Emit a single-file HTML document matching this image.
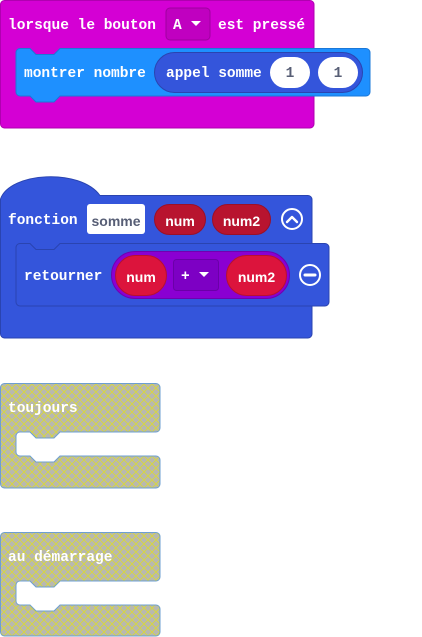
<!DOCTYPE html>
<html><head><meta charset="utf-8"><style>
html,body{margin:0;padding:0;background:#fff;width:422px;height:637px;overflow:hidden}
svg{display:block}
text{font-family:"Liberation Mono",monospace;font-weight:bold;font-size:14.5px;fill:#fff;dominant-baseline:central;transform:translateY(2px)}
.s{font-family:"Liberation Sans",sans-serif;font-size:14px}
</style></head><body>
<svg width="422" height="637" viewBox="0 0 422 637">
<defs>
<pattern id="hatch" width="8" height="8" patternUnits="userSpaceOnUse">
<rect width="8" height="8" fill="#b8b8b0"/>
<path d="M0,0 L8,8 M8,0 L0,8" stroke="#d8d83a" stroke-width="0.9"/>
</pattern>
</defs>
<!-- Block 1 -->
<rect x="0.5" y="0.5" width="313.5" height="127.5" rx="4" fill="#d400d4" stroke="#b000b0"/>
<text x="8" y="24">lorsque le bouton</text>
<rect x="166" y="8" width="44" height="32" rx="4" fill="#c000c0" stroke="#a000a0"/>
<text x="173" y="24">A</text>
<path d="M191,21 h10 l-5,5 z" fill="#fff"/>
<text x="218" y="24">est pressé</text>
<path d="M20,48.5 H30 l6,6 h18 l6,-6 H366 a4,4 0 0 1 4,4 V92 a4,4 0 0 1 -4,4 H60 l-6,6 h-18 l-6,-6 H20 a4,4 0 0 1 -4,-4 V52.5 a4,4 0 0 1 4,-4 Z" fill="#1e90ff" stroke="#1a78d8"/>
<text x="24" y="72">montrer nombre</text>
<rect x="154.5" y="52.5" width="208" height="40" rx="20" fill="#3455db" stroke="#2a44b0"/>
<text x="166" y="72">appel somme</text>
<rect x="270" y="57" width="40" height="31" rx="15.5" fill="#fff"/>
<rect x="318" y="57" width="40" height="31" rx="15.5" fill="#fff"/>
<text x="290" y="72" text-anchor="middle" style="fill:#575e75">1</text>
<text x="338" y="72" text-anchor="middle" style="fill:#575e75">1</text>
<!-- Block 2 -->
<path d="M0.5,199 C10,172 80,168 100,195.5 H308 a4,4 0 0 1 4,4 V334 a4,4 0 0 1 -4,4 H4.5 a4,4 0 0 1 -4,-4 Z" fill="#3455db" stroke="#2a44b0"/>
<text x="8" y="219">fonction</text>
<rect x="87" y="204" width="58" height="30" rx="3" fill="#fff"/>
<text x="116" y="219" text-anchor="middle" style="fill:#575e75" class="s">somme</text>
<rect x="154.5" y="204.5" width="51" height="30" rx="15" fill="#b8142f" stroke="#9a1028"/>
<text x="180" y="219" text-anchor="middle" class="s">num</text>
<rect x="212.5" y="204.5" width="58" height="30" rx="15" fill="#b8142f" stroke="#9a1028"/>
<text x="241.5" y="219" text-anchor="middle" class="s">num2</text>
<circle cx="292" cy="219" r="10" fill="none" stroke="#fff" stroke-width="2"/>
<path d="M287,222 l5,-5 l5,5" fill="none" stroke="#fff" stroke-width="2.4" stroke-linecap="round" stroke-linejoin="round"/>
<path d="M20,243.5 H30 l6,6 h18 l6,-6 H325 a4,4 0 0 1 4,4 V302 a4,4 0 0 1 -4,4 H20 a4,4 0 0 1 -4,-4 V247.5 a4,4 0 0 1 4,-4 Z" fill="#3455db" stroke="#2a44b0"/>
<text x="24" y="275">retourner</text>
<rect x="111.5" y="251.5" width="178" height="47" rx="23.5" fill="#8a00d2" stroke="#7000b0"/>
<rect x="115.5" y="255.5" width="51" height="40" rx="20" fill="#dc143c" stroke="#b81030"/>
<text x="141" y="275" text-anchor="middle" class="s">num</text>
<rect x="173.5" y="259.5" width="45" height="31" rx="3" fill="#7d00c4" stroke="#6a00a8"/>
<text x="181" y="275">+</text>
<path d="M199,272 h10 l-5,5 z" fill="#fff"/>
<rect x="226.5" y="255.5" width="60" height="40" rx="20" fill="#dc143c" stroke="#b81030"/>
<text x="256.5" y="275" text-anchor="middle" class="s">num2</text>
<circle cx="310" cy="275" r="10" fill="none" stroke="#fff" stroke-width="2"/>
<path d="M305,275 h10" stroke="#fff" stroke-width="3" stroke-linecap="round"/>
<!-- Block 3 -->
<path d="M4.5,383.5 H156 a4,4 0 0 1 4,4 V428 a4,4 0 0 1 -4,4 H60 l-6,6 h-18 l-6,-6 H20 a4,4 0 0 0 -4,4 V452 a4,4 0 0 0 4,4 H30 l6,6 h18 l6,-6 H156 a4,4 0 0 1 4,4 V484 a4,4 0 0 1 -4,4 H4.5 a4,4 0 0 1 -4,-4 V387.5 a4,4 0 0 1 4,-4 Z" fill="url(#hatch)" stroke="#6d9fd0"/>
<text x="8" y="407">toujours</text>
<!-- Block 4 -->
<path d="M4.5,532.5 H156 a4,4 0 0 1 4,4 V577 a4,4 0 0 1 -4,4 H60 l-6,6 h-18 l-6,-6 H20 a4,4 0 0 0 -4,4 V601 a4,4 0 0 0 4,4 H30 l6,6 h18 l6,-6 H156 a4,4 0 0 1 4,4 V632 a4,4 0 0 1 -4,4 H4.5 a4,4 0 0 1 -4,-4 V536.5 a4,4 0 0 1 4,-4 Z" fill="url(#hatch)" stroke="#6d9fd0"/>
<text x="8" y="556">au démarrage</text>
</svg>
</body></html>
